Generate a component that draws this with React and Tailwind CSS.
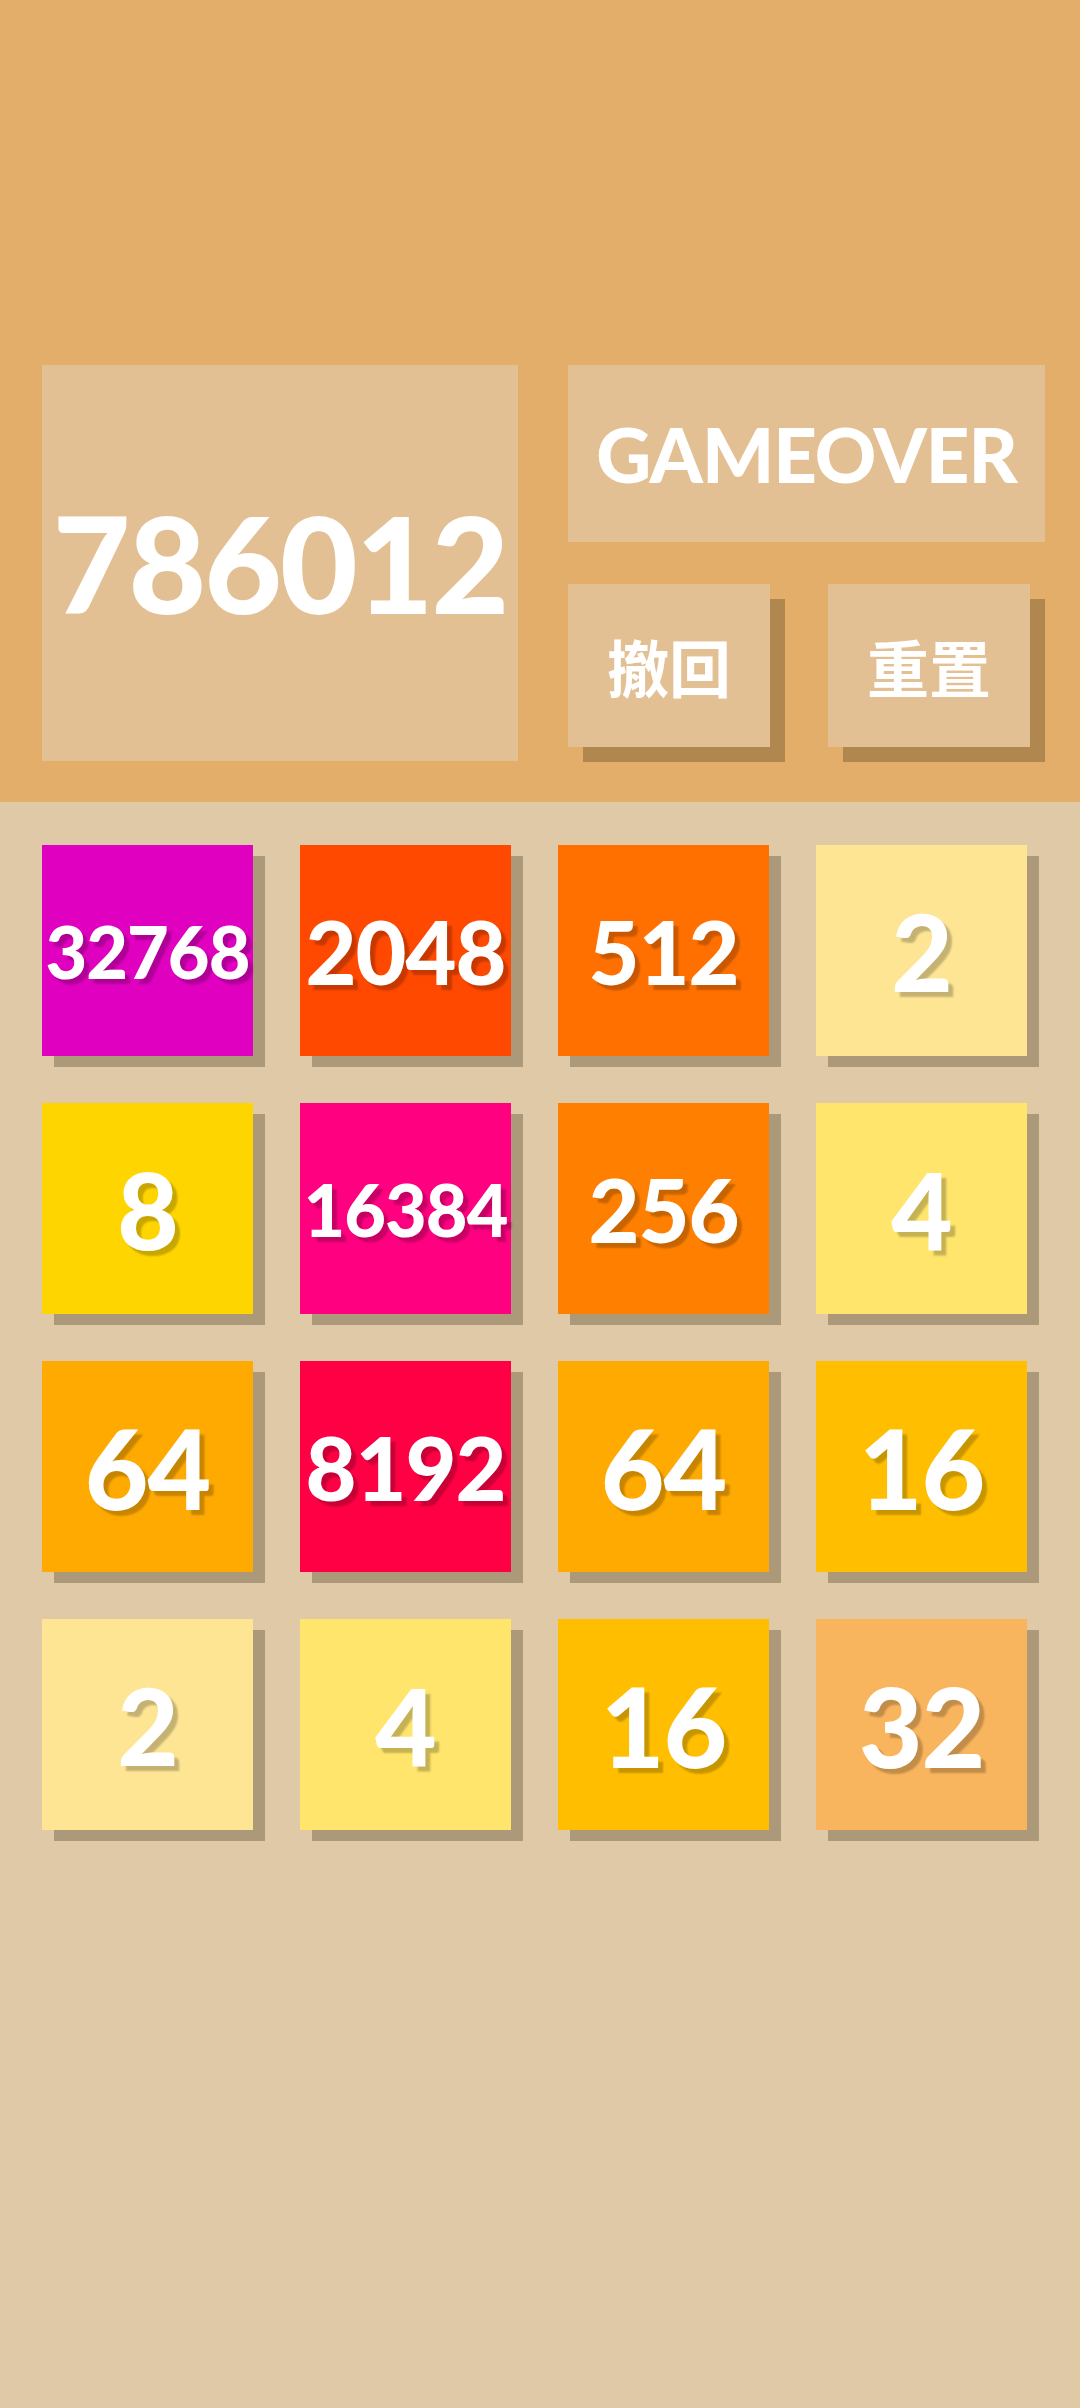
import React from "react";

const tiles = [
  { v: "32768", bg: "bg-[#E000C0]", size: "text-[72px]" },
  { v: "2048", bg: "bg-[#FF4800]", size: "text-[88px]" },
  { v: "512", bg: "bg-[#FF7000]", size: "text-[88px]" },
  { v: "2", bg: "bg-[#FDE594]", size: "text-[106px]" },
  { v: "8", bg: "bg-[#FFD500]", size: "text-[106px]" },
  { v: "16384", bg: "bg-[#FF0080]", size: "text-[72px]" },
  { v: "256", bg: "bg-[#FF8000]", size: "text-[88px]" },
  { v: "4", bg: "bg-[#FFE56B]", size: "text-[106px]" },
  { v: "64", bg: "bg-[#FFAA00]", size: "text-[110px]" },
  { v: "8192", bg: "bg-[#FF0044]", size: "text-[88px]" },
  { v: "64", bg: "bg-[#FFAA00]", size: "text-[110px]" },
  { v: "16", bg: "bg-[#FFBF00]", size: "text-[110px]" },
  { v: "2", bg: "bg-[#FDE594]", size: "text-[106px]" },
  { v: "4", bg: "bg-[#FFE56B]", size: "text-[106px]" },
  { v: "16", bg: "bg-[#FFBF00]", size: "text-[110px]" },
  { v: "32", bg: "bg-[#F9B45E]", size: "text-[110px]" },
];

export default function App() {
  return (
    <div className="w-[1080px] h-[2408px] bg-[#E0C9A6] font-['Lato','Noto_Sans_CJK_SC',sans-serif] overflow-hidden">
      <div className="h-[802px] bg-[#E2AE6A] flex gap-[50px] pl-[42px] pt-[365px]">
        <div className="w-[476px] h-[396px] bg-[#E3C093] flex items-center justify-center">
          <span className="text-white font-black text-[134px] leading-none tracking-[-2px]">786012</span>
        </div>
        <div className="w-[477px] flex flex-col">
          <div className="h-[177px] bg-[#E3C093] flex items-center justify-center">
            <span className="text-white font-black text-[76px] leading-none tracking-[-1px]">GAMEOVER</span>
          </div>
          <div className="mt-[42px] flex gap-[58px]">
            <div className="w-[202px] h-[163px] bg-[#E3C093] shadow-[15px_15px_0_#B0874F] flex items-center justify-center">
              <span className="text-white font-bold text-[62px] leading-none font-['Noto_Sans_CJK_TC','Noto_Sans_CJK_SC',sans-serif]">撤回</span>
            </div>
            <div className="w-[202px] h-[163px] bg-[#E3C093] shadow-[15px_15px_0_#B0874F] flex items-center justify-center">
              <span className="text-white font-bold text-[62px] leading-none font-['Noto_Sans_CJK_TC','Noto_Sans_CJK_SC',sans-serif]">重置</span>
            </div>
          </div>
        </div>
      </div>
      <div className="pt-[43px] pl-[42px] grid grid-cols-[repeat(4,211px)] gap-[47px]">
        {tiles.map((t, i) => (
          <div
            key={i}
            className={`w-[211px] h-[211px] ${t.bg} shadow-[12px_11px_0_#AB9979] flex items-center justify-center`}
          >
            <span
              className={`text-white font-black leading-none tracking-[-1px] ${t.size} [text-shadow:5px_5px_2px_rgba(0,0,0,0.22)]`}
            >
              {t.v}
            </span>
          </div>
        ))}
      </div>
    </div>
  );
}
